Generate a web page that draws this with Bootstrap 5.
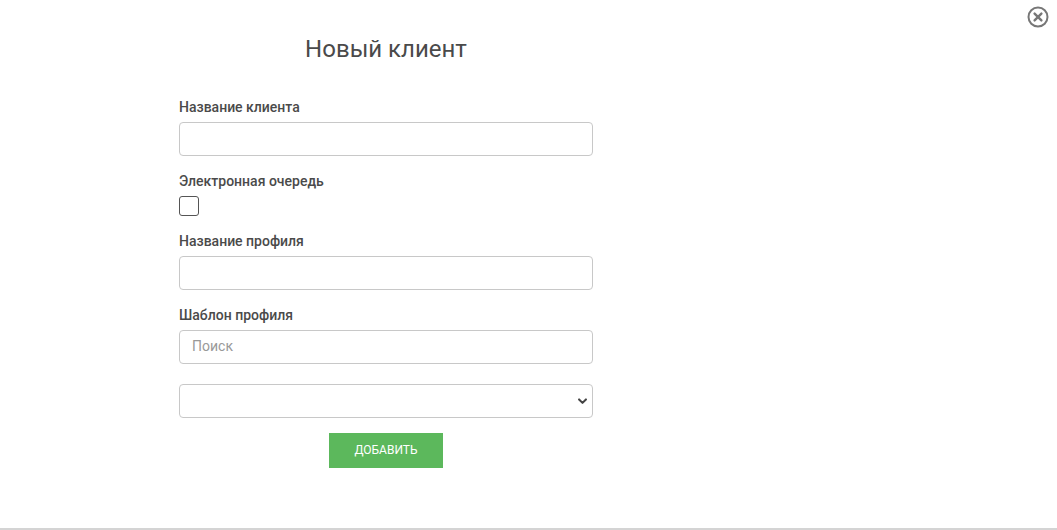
<!DOCTYPE html>
<html lang="en">
<head>
  <meta charset="UTF-8" />
  <meta name="viewport" content="width=device-width, initial-scale=1.0" />
  <title>Новый клиент</title>
  <link href="https://cdn.jsdelivr.net/npm/bootstrap@5.3.0/dist/css/bootstrap.min.css" rel="stylesheet">
  <style>
    html, body {
      height: 530px;
      overflow: hidden;
    }
    body {
      font-family: Roboto, "Liberation Sans", sans-serif;
      color: #444;
      background: #fff;
    }
    .page-wrap {
      height: 530px;
      border-bottom: 2px solid #d4d4d4;
      padding: 0 0 0 179px;
      position: relative;
    }
    .close-icon {
      position: absolute;
      top: 6px;
      right: 8px;
      width: 22px;
      height: 22px;
      display: block;
    }
    .client-form {
      width: 414px;
    }
    .client-title {
      font-size: 24px;
      font-weight: 400;
      line-height: 28px;
      color: #4a4a4a;
      text-align: center;
      margin: 0;
      padding-top: 35px;
      padding-bottom: 36px;
    }
    .field-label {
      display: block;
      font-size: 14px;
      font-weight: 500;
      line-height: 17px;
      color: #4a4a4a;
      margin: 0 0 6px;
    }
    .client-form .form-control,
    .client-form .form-select {
      height: 34px;
      font-size: 14px;
      padding: 5px 12px 7px;
      border: 1px solid #c8c8c8;
      border-radius: 4px;
      color: #444;
      box-shadow: none;
    }
    .client-form .form-control::placeholder {
      color: #999;
    }
    .client-form .form-select {
      margin-top: 20px;
      background-position: right 3px center;
      background-size: 13px 11px;
      background-image: url("data:image/svg+xml,%3csvg xmlns='http://www.w3.org/2000/svg' viewBox='0 0 16 16'%3e%3cpath fill='none' stroke='%23444' stroke-linecap='round' stroke-linejoin='round' stroke-width='3' d='m3 5 5 5 5-5'/%3e%3c/svg%3e");
    }
    .field-gap {
      margin-bottom: 17px;
    }
    .check-box {
      display: block;
      width: 20px;
      height: 20px;
      margin: 0 0 17px;
      border: 1px solid #555;
      border-radius: 3px;
      appearance: none;
      background: #fff;
    }
    .add-btn {
      width: 114px;
      height: 35px;
      margin-top: 15px;
      padding: 0;
      font-size: 12px;
      line-height: 35px;
      color: #fff;
      background: #5cb85c;
      border: 0;
      border-radius: 0;
    }
  </style>
</head>
<body>
  <div class="page-wrap">
    <svg class="close-icon" viewBox="0 0 22 22" aria-label="Закрыть">
      <circle cx="11" cy="11" r="9.5" fill="none" stroke="#777" stroke-width="2" />
      <path d="M7.6 7.6l6.8 6.8M14.4 7.6l-6.8 6.8" fill="none" stroke="#777" stroke-width="2.4" stroke-linecap="round" />
    </svg>

    <form class="client-form">
      <h1 class="client-title">Новый клиент</h1>

      <label class="field-label">Название клиента</label>
      <input type="text" class="form-control field-gap" />

      <label class="field-label">Электронная очередь</label>
      <input type="checkbox" class="check-box" />

      <label class="field-label">Название профиля</label>
      <input type="text" class="form-control field-gap" />

      <label class="field-label">Шаблон профиля</label>
      <input type="text" class="form-control" placeholder="Поиск" />
      <select class="form-select">
        <option></option>
      </select>

      <div class="d-flex justify-content-center">
        <button type="button" class="btn add-btn">ДОБАВИТЬ</button>
      </div>
    </form>
  </div>
  <script src="https://cdn.jsdelivr.net/npm/bootstrap@5.3.0/dist/js/bootstrap.bundle.min.js"></script>
</body>
</html>
